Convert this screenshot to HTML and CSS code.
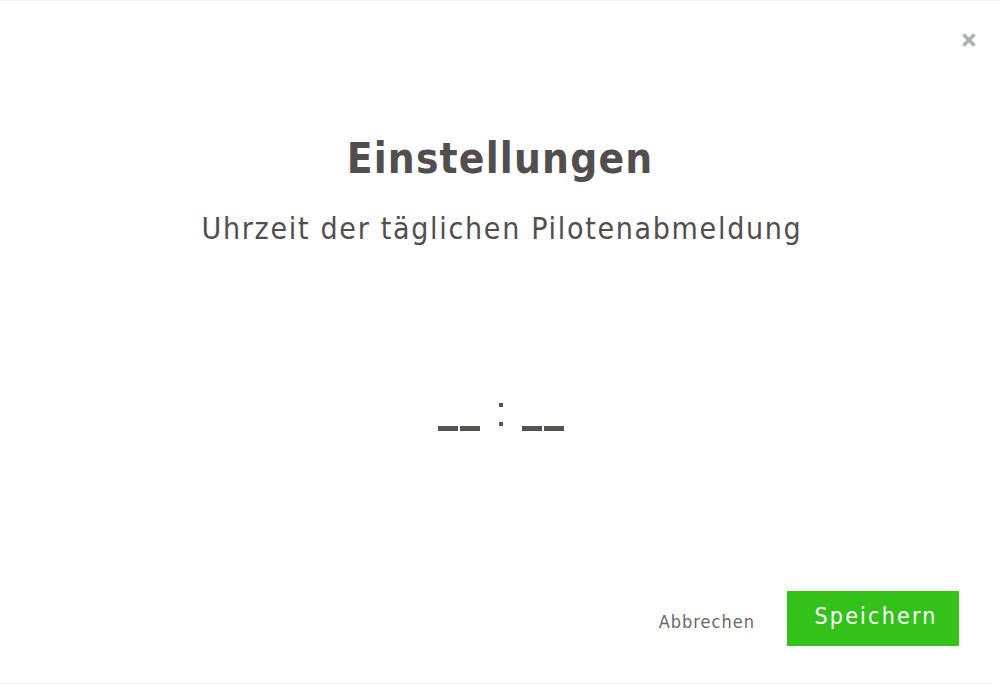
FILE: index.html
```html
<!DOCTYPE html>
<html lang="de">
<head>
<meta charset="utf-8">
<link rel="stylesheet" href="styles.css">
</head>
<body>
<div class="modal">
  <div class="topbar">
    <button class="close" aria-label="Schließen">
      <svg width="16" height="16" viewBox="0 0 16 16"><path d="M2.5 2.5 L13.5 13.5 M13.5 2.5 L2.5 13.5" stroke="#a9b1b5" stroke-width="3.4" stroke-linecap="butt"/></svg>
    </button>
  </div>
  <h1 class="title">Einstellungen</h1>
  <p class="subtitle">Uhrzeit der täglichen Pilotenabmeldung</p>
  <div class="time">
    <span class="bars"><i></i><i></i></span>
    <span class="colon"><i></i><i></i></span>
    <span class="bars"><i></i><i></i></span>
  </div>
  <div class="actions">
    <button class="cancel">Abbrechen</button>
    <button class="save">Speichern</button>
  </div>
</div>
</body>
</html>
```

FILE: styles.css
```css
html, body {
  margin: 0;
  padding: 0;
  background: #ffffff;
}
body {
  font-family: "DejaVu Sans Condensed", "DejaVu Sans", sans-serif;
  color: #514d4d;
}
.modal {
  position: relative;
  width: 1000px;
  height: 684px;
  border-top: 1px solid #f1f1f1;
  box-sizing: border-box;
  display: flex;
  flex-direction: column;
  align-items: center;
  background: #fff;
}
.modal::after {
  content: "";
  position: absolute;
  left: 0;
  bottom: 0;
  width: 992px;
  height: 1px;
  background: #eeeeee;
}
.topbar {
  align-self: stretch;
  display: flex;
  justify-content: flex-end;
  padding: 31px 23px 0 0;
  height: 17px;
}
.close {
  border: 0;
  background: none;
  padding: 0;
  width: 16px;
  height: 16px;
  cursor: pointer;
}
.close svg { display: block; }
.title {
  margin: 85px 0 0 0;
  font-weight: bold;
  font-size: 42px;
  line-height: 50px;
  letter-spacing: 1.2px;
  color: #524e4e;
}
.subtitle {
  margin: 28px 0 0 0;
  padding-left: 4px;
  font-size: 30px;
  line-height: 34px;
  letter-spacing: 1.7px;
  color: #524e4e;
}
.time {
  margin-top: 154px;
  display: flex;
  align-items: flex-end;
  gap: 19px;
  height: 31px;
  margin-left: 1px;
}
.bars {
  display: flex;
  gap: 2px;
}
.bars i {
  display: block;
  width: 20px;
  height: 5px;
  background: #555252;
}
.colon {
  display: flex;
  flex-direction: column;
  gap: 15px;
  padding-bottom: 5px;
}
.colon i {
  display: block;
  width: 4px;
  height: 4px;
  background: #555252;
}
.actions {
  margin-top: auto;
  margin-bottom: 38px;
  align-self: stretch;
  display: flex;
  justify-content: flex-end;
  align-items: center;
  gap: 32px;
  padding-right: 41px;
}
.cancel {
  border: 0;
  background: none;
  padding: 6px 0 0 0;
  font-family: inherit;
  font-size: 18px;
  letter-spacing: 1px;
  color: #6b6868;
}
.save {
  border: 0;
  background: #33c21a;
  color: #fff;
  width: 172px;
  height: 55px;
  padding: 0 0 5px 6px;
  font-family: inherit;
  font-size: 23px;
  letter-spacing: 2.2px;
}
```
